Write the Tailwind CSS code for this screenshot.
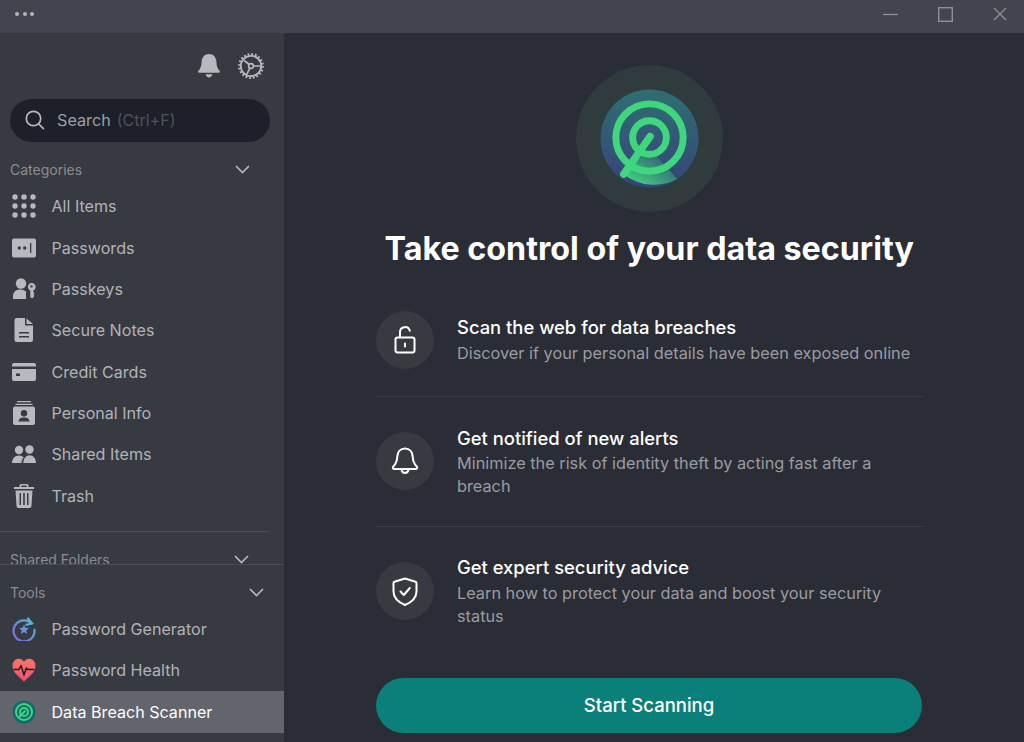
<!DOCTYPE html>
<html lang="en">

<head>
    <meta charset="UTF-8" />
    <title>Data Breach Scanner</title>
    <script src="https://cdn.jsdelivr.net/npm/@tailwindcss/browser@4"></script>
</head>

<body class="bg-[#2a2d35] font-['Inter',sans-serif] h-[742px] w-[1024px] overflow-hidden">
    <!-- title bar -->
    <div class="h-[33px] bg-[#42454d] flex items-center justify-between">
        <div class="flex gap-[3.5px] pl-[15px] pb-[5px]">
            <span class="w-[4px] h-[4px] rounded-full bg-[#b5b6b9]"></span>
            <span class="w-[4px] h-[4px] rounded-full bg-[#b5b6b9]"></span>
            <span class="w-[4px] h-[4px] rounded-full bg-[#b5b6b9]"></span>
        </div>
        <div class="flex items-center gap-[40px] pr-[17px] pb-[5px]">
            <svg width="15" height="15" viewBox="0 0 15 15" fill="none" stroke="#8e9095" stroke-width="1.3"><path d="M0 7.5h15" /></svg>
            <svg width="15" height="15" viewBox="0 0 15 15" fill="none" stroke="#8e9095" stroke-width="1.4"><rect x=".7" y=".7" width="13.6" height="13.6" /></svg>
            <svg width="14" height="14" viewBox="0 0 14 14" fill="none" stroke="#8e9095" stroke-width="1.4"><path d="M1 1l12 12M13 1L1 13" /></svg>
        </div>
    </div>

    <div class="flex h-[709px]">
        <!-- sidebar -->
        <div class="w-[283.500px] bg-[#373a41] flex flex-col shrink-0">
            <div class="h-[498px] overflow-hidden shrink-0">
                <div class="flex justify-end items-center gap-[17px] h-[66px] pr-[20px]">
                    <svg width="24" height="26" viewBox="0 0 24 25" preserveAspectRatio="none" fill="#b8b9bc"><path d="M12 1c4.500 0 7.200 3.400 7.400 7.500.2 4.300 1 6.300 3.100 8.600.7.800.4 2-.8 2H2.300c-1.200 0-1.500-1.200-.8-2C3.600 14.800 4.400 12.800 4.600 8.500 4.800 4.400 7.500 1 12 1z" /><path d="M8.600 20.500h6.800c-.4 1.900-1.800 3-3.400 3s-3-1.100-3.400-3z" /></svg>
                    <svg width="26" height="26" viewBox="0 0 26 26" fill="none" stroke="#b8b9bc"><circle cx="13" cy="13" r="10.200" stroke-width="1.800" /><circle cx="13" cy="13" r="11.800" stroke-width="2.200" stroke-dasharray="1.800 1.900" /><circle cx="13" cy="13" r="2.400" stroke-width="1.600" /><path d="M11.200 11.500L6.200 7.500M15.300 13h7M11.800 15l-3 6.500" stroke-width="1.700" /></svg>
                </div>
                <div class="mx-[10px] w-[259.500px] h-[42.500px] rounded-full bg-[#1d2028] flex items-center pl-[15px]">
                    <svg width="20" height="20" viewBox="0 0 20 20" fill="none" stroke="#b8b9bc" stroke-width="1.700" stroke-linecap="round"><circle cx="8.500" cy="8.500" r="7.200" /><path d="M13.800 14l4.600 4.700" /></svg>
                    <span class="ml-[12px] text-[16.200px] text-[#9d9fa4]">Search</span>
                    <span class="ml-[6px] text-[16px] text-[#4f525a]">(Ctrl+F)</span>
                </div>
                <div class="flex items-center justify-between h-[44px] pt-[11px] pl-[10px] pr-[34px] text-[14px] text-[#8b8d92]">
                    <span>Categories</span>
                    <svg width="15" height="9" viewBox="0 0 15 9" fill="none" stroke="#b8b9bc" stroke-width="1.600"><path d="M1 1l6.500 6.500L14 1" /></svg>
                </div>
                <div class="flex items-center h-[41.400px] text-[16.100px] text-[#b2b3b7]">
                    <svg class="ml-[12px] mr-[15.500px]" width="24" height="24" viewBox="0 0 24 24" fill="#b8b9bc"><circle cx="3" cy="3" r="2.700" /><circle cx="12" cy="3" r="2.700" /><circle cx="21" cy="3" r="2.700" /><circle cx="3" cy="12" r="2.700" /><circle cx="12" cy="12" r="2.700" /><circle cx="21" cy="12" r="2.700" /><circle cx="3" cy="21" r="2.700" /><circle cx="12" cy="21" r="2.700" /><circle cx="21" cy="21" r="2.700" /></svg>
                    All Items
                </div>
                <div class="flex items-center h-[41.400px] text-[16.100px] text-[#b2b3b7]">
                    <svg class="ml-[12px] mr-[15.500px]" width="24" height="24" viewBox="0 0 24 24" fill="#b8b9bc"><path fill-rule="evenodd" d="M2 2.500h20a2 2 0 0 1 2 2v15a2 2 0 0 1-2 2H2a2 2 0 0 1-2-2v-15a2 2 0 0 1 2-2zm3.500 9.500a1.700 1.700 0 1 0 3.400 0 1.700 1.700 0 0 0-3.400 0zm5.500 0a1.700 1.700 0 1 0 3.400 0 1.700 1.700 0 0 0-3.400 0zm7-5v10h1.300V7z" /></svg>
                    Passwords
                </div>
                <div class="flex items-center h-[41.400px] text-[16.100px] text-[#b2b3b7]">
                    <svg class="ml-[12px] mr-[15.500px]" width="24" height="24" viewBox="0 0 24 24" fill="#b8b9bc"><circle cx="9" cy="6.500" r="5.200" /><path d="M1 22v-3c0-4 3-6.500 7-6.500 2.500 0 4.500.7 6 2V22z" /><path fill-rule="evenodd" d="M19.500 6a4 4 0 0 1 1.800 7.600V15l1.200 1.300-1.200 1.200 1.200 1.300-2.300 2.700-1.900-1.500v-6.400A4 4 0 0 1 19.500 6zm0 2.200a1.200 1.200 0 1 0 0 2.400 1.200 1.200 0 0 0 0-2.400z" /></svg>
                    Passkeys
                </div>
                <div class="flex items-center h-[41.400px] text-[16.100px] text-[#b2b3b7]">
                    <svg class="ml-[12px] mr-[15.500px]" width="24" height="24" viewBox="0 0 24 24" fill="#b8b9bc"><path fill-rule="evenodd" d="M4.500 0H13v7.500h8V22a2 2 0 0 1-2 2H4.500a2 2 0 0 1-2-2V2a2 2 0 0 1 2-2zM7 14v1.500h10V14zm0 4v1.500h10V18zM14.500.5l6.500 5.500h-6.500z" /></svg>
                    Secure Notes
                </div>
                <div class="flex items-center h-[41.400px] text-[16.100px] text-[#b2b3b7]">
                    <svg class="ml-[12px] mr-[15.500px]" width="24" height="24" viewBox="0 0 24 24" fill="#b8b9bc"><path fill-rule="evenodd" d="M2 3h20a2 2 0 0 1 2 2v1.500H0V5a2 2 0 0 1 2-2zM0 9h24v10a2 2 0 0 1-2 2H2a2 2 0 0 1-2-2zm4 4.500V16h4v-2.500z" /></svg>
                    Credit Cards
                </div>
                <div class="flex items-center h-[41.400px] text-[16.100px] text-[#b2b3b7]">
                    <svg class="ml-[12px] mr-[15.500px]" width="24" height="24" viewBox="0 0 24 24" fill="#b8b9bc"><path d="M5 0h14v1.300H5zM3.500 2.700h17V4h-17z" /><path fill-rule="evenodd" d="M3 5.500h18a2 2 0 0 1 2 2V22a2 2 0 0 1-2 2H3a2 2 0 0 1-2-2V7.500a2 2 0 0 1 2-2zm9 3.500a3.200 3.200 0 1 0 0 6.400A3.200 3.200 0 0 0 12 9zm-5.500 11.500h11c0-2.500-2.400-4-5.500-4s-5.500 1.500-5.500 4z" /></svg>
                    Personal Info
                </div>
                <div class="flex items-center h-[41.400px] text-[16.100px] text-[#b2b3b7]">
                    <svg class="ml-[12px] mr-[15.500px]" width="24" height="24" viewBox="0 0 24 24" fill="#b8b9bc"><circle cx="7" cy="7" r="4.200" /><circle cx="17.500" cy="6.500" r="4.200" /><path d="M0 20c0-4.500 3-7.500 7-7.500 2 0 3.600.7 4.800 2-1.500 1.400-2.300 3.300-2.400 5.500zM11.200 20c.2-4.500 3-7.800 6.300-7.800 3.700 0 6.500 3.300 6.500 7.800z" /></svg>
                    Shared Items
                </div>
                <div class="flex items-center h-[41.400px] text-[16.100px] text-[#b2b3b7]">
                    <svg class="ml-[12px] mr-[15.500px]" width="24" height="24" viewBox="0 0 24 24" fill="#b8b9bc"><path fill-rule="evenodd" d="M9 0h6a1.500 1.500 0 0 1 1.500 1.500V3H22v2H2V3h5.500V1.500A1.500 1.500 0 0 1 9 0zm.2 1.500V3h5.600V1.500zM3.500 6.500h17l-1 15.500a2 2 0 0 1-2 2h-11a2 2 0 0 1-2-2zM7.500 9v12h1.500V9zm3.700 0v12h1.600V9zm3.800 0v12h1.500V9z" /></svg>
                    Trash
                </div>
            </div>
            <div class="h-[33px] shrink-0 border-t border-[#494c53] w-[269px] overflow-hidden">
                <div class="flex items-center justify-between h-[55px] pl-[10px] pr-[20px] text-[14px] text-[#8b8d92]">
                    <span>Shared Folders</span>
                    <svg width="15" height="9" viewBox="0 0 15 9" fill="none" stroke="#b8b9bc" stroke-width="1.600"><path d="M1 1l6.500 6.500L14 1" /></svg>
                </div>
            </div>
            <div class="border-t border-[#494c53] flex-1">
                <div class="flex items-center justify-between h-[43px] pt-[11px] pl-[10px] pr-[20px] text-[14px] text-[#8b8d92]">
                    <span>Tools</span>
                    <svg width="15" height="9" viewBox="0 0 15 9" fill="none" stroke="#b8b9bc" stroke-width="1.600"><path d="M1 1l6.500 6.500L14 1" /></svg>
                </div>
                <div class="flex items-center h-[41.400px] text-[16.100px] text-[#b2b3b7]">
                    <svg class="ml-[12px] mr-[15.500px]" width="24" height="24" viewBox="0 0 24 24" fill="none">
                        <defs><linearGradient id="gen" x1="1" y1="0" x2="0" y2="1"><stop offset="0" stop-color="#4fb6d8" /><stop offset="1" stop-color="#7c67d8" /></linearGradient></defs>
                        <path d="M19.500 6.500A10.500 10.500 0 1 0 22.500 13" stroke="url(#gen)" stroke-width="2.300" stroke-linecap="round" />
                        <path d="M16 1.500l4 4.800-5.500 1.500" stroke="#4fb6d8" stroke-width="2.200" stroke-linecap="round" />
                        <path d="M12 7.500l1.400 3.300 3.600.3-2.700 2.300.8 3.500-3.100-1.900-3.100 1.900.8-3.500L7 11.100l3.600-.3z" fill="#6f8fe6" />
                    </svg>
                    Password Generator
                </div>
                <div class="flex items-center h-[41.400px] text-[16.100px] text-[#b2b3b7]">
                    <svg class="ml-[12px] mr-[15.500px]" width="24" height="24" viewBox="0 0 24 24" fill="none">
                        <defs><linearGradient id="heart" x1="0" y1="0" x2="0" y2="1"><stop offset="0" stop-color="#f5776a" /><stop offset="1" stop-color="#f04f72" /></linearGradient></defs>
                        <path d="M12 23.500C5 17.500.5 13.500.5 7.800.5 3.500 3.500.8 6.800.8c2.200 0 4 1 5.200 3 1.200-2 3-3 5.200-3 3.300 0 6.300 2.700 6.300 7 0 5.700-4.500 9.700-11.500 15.700z" fill="url(#heart)" />
                        <path d="M1.500 11.500h5.500l2-4 3 9.500 2.300-7 1.200 1.500h7" stroke="#1f2127" stroke-width="1.500" stroke-linejoin="round" />
                    </svg>
                    Password Health
                </div>
                <div class="flex items-center h-[42px] text-[16.100px] text-white bg-[#62656c]">
                    <svg class="ml-[12px] mr-[15.500px]" width="24" height="24" viewBox="0 0 24 24" fill="none">
                        <circle cx="12" cy="12" r="11.500" fill="#14696d" />
                        <circle cx="12" cy="12" r="8" stroke="#3fd67d" stroke-width="2" />
                        <circle cx="12" cy="12" r="4" stroke="#3fd67d" stroke-width="2" />
                        <path d="M12.800 11.200L7 17" stroke="#3fd67d" stroke-width="2" stroke-linecap="round" />
                    </svg>
                    Data Breach Scanner
                </div>
            </div>
        </div>

        <!-- main -->
        <div class="flex-1 pt-[32px] pl-[92.500px] pr-[101.500px]">
            <div class="flex justify-center">
                <div class="w-[147px] h-[147px] rounded-full bg-[#2f3b3c] flex items-center justify-center">
                    <svg width="99" height="99" viewBox="0 0 100 100" fill="none">
                        <defs>
                            <linearGradient id="disc" x1="0" y1="0" x2="0" y2="1"><stop offset="0" stop-color="#2f6f70" /><stop offset="1" stop-color="#35447a" /></linearGradient>
                            <linearGradient id="sweep" x1="0.200" y1="1" x2="0.900" y2="0.200"><stop offset="0" stop-color="#3fd67d" /><stop offset="1" stop-color="#3fd67d" stop-opacity="0" /></linearGradient>
                        </defs>
                        <circle cx="50" cy="50" r="49.500" fill="url(#disc)" />
                        <path d="M50 60L24 86A49.500 49.500 0 0 0 78 91z" fill="url(#sweep)" />
                        <circle cx="50" cy="49" r="34" stroke="#3fd67d" stroke-width="7" />
                        <circle cx="50" cy="49" r="17" stroke="#3fd67d" stroke-width="7" />
                        <path d="M50.500 48L24 86" stroke="#3fd67d" stroke-width="7.500" stroke-linecap="round" />
                    </svg>
                </div>
            </div>
            <h1 class="mt-[16px] h-[42px] text-[32.250px] leading-[42px] font-bold text-white text-center whitespace-nowrap">Take control of your data security</h1>

            <div class="mt-[41px] flex gap-[23px] h-[86px] border-b border-[#3b3e45]">
                <div class="w-[58px] h-[58px] rounded-full bg-[#373a41] shrink-0 flex items-center justify-center">
                    <svg width="22" height="28" viewBox="0 0 22 28" fill="none" stroke="#fff" stroke-width="2" stroke-linecap="round"><rect x="1.500" y="11.500" width="19" height="15" rx="2" /><path d="M6 11.500V6a5 5 0 0 1 9.800-1.300" /><path d="M11 17.500v3" /></svg>
                </div>
                <div>
                    <div class="text-[18.400px] leading-[24px] font-medium text-white mt-[4px]">Scan the web for data breaches</div>
                    <div class="mt-[3px] text-[16.300px] leading-[23px] text-[#9a9ca1]">Discover if your personal details have been exposed online</div>
                </div>
            </div>
            <div class="pt-[35px] flex gap-[23px] h-[130px] border-b border-[#3b3e45]">
                <div class="w-[58px] h-[58px] rounded-full bg-[#373a41] shrink-0 flex items-center justify-center">
                    <svg width="28" height="28" viewBox="0 0 28 28" fill="none" stroke="#fff" stroke-width="2" stroke-linejoin="round"><path d="M14 1.500c4.800 0 7.500 3.600 7.700 8 .2 5 1.300 7.300 4 10 .9 1 .4 2.500-1 2.500H3.300c-1.400 0-1.900-1.500-1-2.500 2.700-2.700 3.800-5 4-10 .2-4.400 2.900-8 7.700-8z" /><path d="M10.500 22.500c.4 2.200 1.900 3.500 3.500 3.500s3.100-1.300 3.500-3.500" /></svg>
                </div>
                <div>
                    <div class="text-[18.400px] leading-[24px] font-medium text-white -mt-[6px]">Get notified of new alerts</div>
                    <div class="mt-[2px] text-[16.300px] leading-[23px] text-[#9a9ca1]">Minimize the risk of identity theft by acting fast after a breach</div>
                </div>
            </div>
            <div class="pt-[35px] flex gap-[23px] h-[151px]">
                <div class="w-[58px] h-[58px] rounded-full bg-[#373a41] shrink-0 flex items-center justify-center">
                    <svg width="26" height="29" viewBox="0 0 26 29" fill="none" stroke="#fff" stroke-width="2" stroke-linejoin="round" stroke-linecap="round"><path d="M13 1.500l10.500 3.300c.7.200 1 .7 1 1.400v8.300c0 6-4.500 10.500-11.500 13.500C6 25 1.500 20.500 1.500 14.500V6.200c0-.7.300-1.200 1-1.400z" /><path d="M8.500 14.500l3.300 3.500 6-7" /></svg>
                </div>
                <div>
                    <div class="text-[18.400px] leading-[24px] font-medium text-white -mt-[7px]">Get expert security advice</div>
                    <div class="mt-[3px] text-[16.300px] leading-[23px] text-[#9a9ca1]">Learn how to protect your data and boost your security status</div>
                </div>
            </div>
            <button class="w-[546px] h-[55px] rounded-full bg-[#0b7f7a] text-white text-[18.500px] font-medium">Start Scanning</button>
        </div>
    </div>
</body>

</html>
